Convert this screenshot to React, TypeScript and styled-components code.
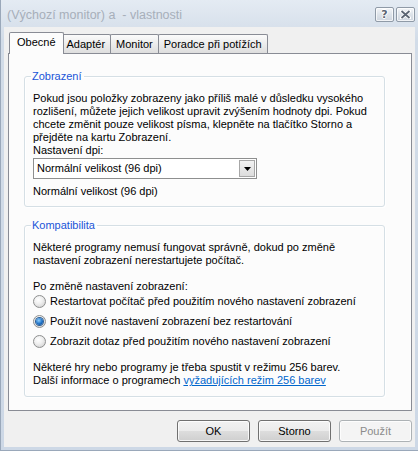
import React, { FC } from 'react'
import styled, { createGlobalStyle } from 'styled-components'

const GlobalStyle = createGlobalStyle`
  html, body {
    margin: 0;
    padding: 0;
    background: #f0f0f0;
  }
  body {
    font-family: Tahoma, "Liberation Sans", Arial, sans-serif;
    font-size: 11px;
    color: #000;
  }
`

const TABS = ['Obecné', 'Adaptér', 'Monitor', 'Poradce při potížích']

const RADIOS = [
  { label: 'Restartovat počítač před použitím nového nastavení zobrazení', checked: false },
  { label: 'Použít nové nastavení zobrazení bez restartování', checked: true },
  { label: 'Zobrazit dotaz před použitím nového nastavení zobrazení', checked: false },
]

const App: FC = () => {
  return (
    <>
      <GlobalStyle />
      <StyledWindow>
        <StyledTitleBar>
          <StyledTitle>(Výchozí monitor) a &nbsp;- vlastnosti</StyledTitle>
          <StyledCaptionButtons>
            <StyledCaptionButton>
              <StyledHelpGlyph>?</StyledHelpGlyph>
            </StyledCaptionButton>
            <StyledCaptionButton>
              <svg width="11" height="9" viewBox="0 0 11 9">
                <path d="M1.5 1 L9.5 8 M9.5 1 L1.5 8" stroke="#fff" strokeWidth="3.4" strokeLinecap="square" />
                <path d="M1.5 1 L9.5 8 M9.5 1 L1.5 8" stroke="#5b6573" strokeWidth="1.8" />
              </svg>
            </StyledCaptionButton>
          </StyledCaptionButtons>
        </StyledTitleBar>

        <StyledClient>
          <StyledTabStrip>
            {TABS.map((tab, index) => (
              <StyledTab key={tab} $active={index === 0}>{tab}</StyledTab>
            ))}
          </StyledTabStrip>

          <StyledTabPanel>
            <StyledGroup $bottom={8}>
              <StyledLegend>Zobrazení</StyledLegend>
              <StyledText>
                Pokud jsou položky zobrazeny jako příliš malé v důsledku vysokého rozlišení, můžete jejich
                velikost upravit zvýšením hodnoty dpi. Pokud chcete změnit pouze velikost písma, klepněte
                na tlačítko Storno a přejděte na kartu Zobrazení.
              </StyledText>
              <StyledText>Nastavení dpi:</StyledText>
              <StyledSelect>
                <StyledSelectValue>Normální velikost (96 dpi)</StyledSelectValue>
                <StyledSelectArrow>
                  <svg width="7" height="4" viewBox="0 0 7 4">
                    <path d="M0 0 H7 L3.5 4 Z" fill="#000" />
                  </svg>
                </StyledSelectArrow>
              </StyledSelect>
              <StyledText $gap={6}>Normální velikost (96 dpi)</StyledText>
            </StyledGroup>

            <StyledGroup $gap={12} $bottom={9}>
              <StyledLegend>Kompatibilita</StyledLegend>
              <StyledText>
                Některé programy nemusí fungovat správně, dokud po změně nastavení zobrazení
                nerestartujete počítač.
              </StyledText>
              <StyledText $gap={13}>Po změně nastavení zobrazení:</StyledText>
              <StyledRadioList>
                {RADIOS.map(radio => (
                  <StyledRadioRow key={radio.label}>
                    <StyledRadio $checked={radio.checked} />
                    {radio.label}
                  </StyledRadioRow>
                ))}
              </StyledRadioList>
              <StyledText $gap={10}>
                Některé hry nebo programy je třeba spustit v režimu 256 barev.
                <br />
                Další informace o programech <StyledLink>vyžadujících režim 256 barev</StyledLink>
              </StyledText>
            </StyledGroup>
          </StyledTabPanel>

          <StyledFooter>
            <StyledButton>OK</StyledButton>
            <StyledButton>Storno</StyledButton>
            <StyledButton disabled>Použít</StyledButton>
          </StyledFooter>
        </StyledClient>
      </StyledWindow>
    </>
  )
}

const StyledWindow = styled.div`
  width: 418px;
  height: 451px;
  box-sizing: border-box;
  display: flex;
  flex-direction: column;
  background: linear-gradient(#e4ebf3, #d2dce8 40px, #cdd8e6);
  border: 1px solid #9aa8ba;
  border-top: none;
  border-right: none;
`

const StyledTitleBar = styled.div`
  height: 27px;
  flex-shrink: 0;
  display: flex;
  align-items: center;
  justify-content: space-between;
  padding: 0 3px 0 6px;
`

const StyledTitle = styled.span`
  font-family: "Liberation Sans", Arial, sans-serif;
  font-size: 12.5px;
  color: #a7afba;
  padding-top: 2px;
`

const StyledCaptionButtons = styled.div`
  display: flex;
  gap: 2px;
  padding-top: 2px;
`

const StyledCaptionButton = styled.div`
  width: 19px;
  height: 15px;
  box-sizing: border-box;
  border: 1px solid #8f9aa7;
  border-radius: 2px;
  background: linear-gradient(#f3f5f8, #dde3ea 50%, #cfd6df);
  box-shadow: inset 0 0 0 1px rgba(255, 255, 255, 0.7);
  display: flex;
  align-items: center;
  justify-content: center;
`

const StyledHelpGlyph = styled.span`
  font-family: "DejaVu Sans", sans-serif;
  font-weight: bold;
  font-size: 11px;
  line-height: 11px;
  color: #5b6573;
  text-shadow: 1px 0 0 #fff, -1px 0 0 #fff, 0 1px 0 #fff, 0 -1px 0 #fff;
`

const StyledClient = styled.div`
  flex: 1;
  display: flex;
  flex-direction: column;
  background: #f0f0f0;
  margin: 0 3px 3px 3px;
  padding: 5px 3px 0 4px;
`

const StyledTabStrip = styled.div`
  display: flex;
  align-items: flex-end;
  padding-left: 1px;
  position: relative;
  z-index: 1;
  margin-bottom: -1px;
`

const StyledTab = styled.div<{ $active?: boolean }>`
  box-sizing: border-box;
  border: 1px solid #898c95;
  border-bottom: none;
  border-radius: 2px 2px 0 0;
  display: flex;
  align-items: center;
  justify-content: center;
  padding: ${p => (p.$active ? '0 7px' : '0 5px')};
  height: ${p => (p.$active ? '22px' : '19px')};
  margin: ${p => (p.$active ? '0 -2px 0 -1px' : '0 0 1px -1px')};
  background: ${p => (p.$active ? '#fcfcfc' : 'linear-gradient(#fbfbfb, #ececec 50%, #dedede)')};
  position: relative;
  z-index: ${p => (p.$active ? 2 : 0)};
  padding-bottom: ${p => (p.$active ? '3px' : '0')};
  &:first-child {
    margin-left: 0;
  }
`

const StyledTabPanel = styled.div`
  height: 358px;
  box-sizing: border-box;
  border: 1px solid #898c95;
  background: #fcfcfc;
  padding: 16px 26px 0 15px;
  display: flex;
  flex-direction: column;
`

const StyledGroup = styled.fieldset<{ $gap?: number; $bottom?: number }>`
  margin: ${p => p.$gap ?? 0}px 0 0 0;
  padding: 9px 8px ${p => p.$bottom ?? 9}px 8px;
  border: 1px solid #d5dfe5;
  border-radius: 3px;
  box-shadow: inset 1px 1px 0 #fff, 1px 1px 0 #fff;
  min-width: 0;
`

const StyledLegend = styled.legend`
  color: #1a55d8;
  padding: 0 2px 0 1px;
  margin-left: -2px;
  line-height: 13px;
`

const StyledText = styled.div<{ $gap?: number }>`
  line-height: 13px;
  margin-top: ${p => p.$gap ?? 0}px;
`

const StyledSelect = styled.div`
  margin-top: 1px;
  width: 224px;
  height: 21px;
  box-sizing: border-box;
  border: 1px solid #8e8f8f;
  background: #fff;
  display: flex;
  align-items: center;
  justify-content: space-between;
  padding: 0 1px 0 3px;
`

const StyledSelectValue = styled.span`
  line-height: 13px;
`

const StyledSelectArrow = styled.div`
  width: 16px;
  height: 17px;
  box-sizing: border-box;
  border: 1px solid #a7a7a7;
  background: linear-gradient(#f2f2f2, #dcdcdc);
  display: flex;
  align-items: center;
  justify-content: center;
`

const StyledRadioList = styled.div`
  display: flex;
  flex-direction: column;
  margin-top: -2px;
`

const StyledRadioRow = styled.div`
  height: 20px;
  display: flex;
  align-items: center;
  gap: 4px;
`

const StyledRadio = styled.span<{ $checked?: boolean }>`
  width: 13px;
  height: 13px;
  box-sizing: border-box;
  border-radius: 50%;
  border: 1px solid #8e8f8f;
  background: radial-gradient(circle at 40% 35%, #ffffff, #f0f0f0 40%, #c9c9c9);
  display: flex;
  align-items: center;
  justify-content: center;
  flex-shrink: 0;
  &::after {
    content: '';
    display: ${p => (p.$checked ? 'block' : 'none')};
    width: 7px;
    height: 7px;
    border-radius: 50%;
    background: radial-gradient(circle at 40% 35%, #8fd0ff, #1c6fc4 55%, #0b3f86);
    box-shadow: 0 0 0 1px #2c5f95;
  }
`

const StyledLink = styled.span`
  color: #0066cc;
  text-decoration: underline;
  cursor: pointer;
`

const StyledFooter = styled.div`
  display: flex;
  justify-content: flex-end;
  gap: 8px;
  padding: 9px 0 0 0;
`

const StyledButton = styled.button`
  width: 73px;
  height: 22px;
  box-sizing: border-box;
  font-family: inherit;
  font-size: 11px;
  color: #000;
  border: 1px solid #707070;
  border-radius: 3px;
  background: linear-gradient(#f2f2f2, #ebebeb 50%, #dddddd 51%, #cfcfcf);
  box-shadow: inset 0 0 0 1px rgba(255, 255, 255, 0.8);
  padding: 0;
  &:disabled {
    color: #8b8b8b;
    border-color: #adb2b5;
    background: #f4f4f4;
  }
`

export default App
